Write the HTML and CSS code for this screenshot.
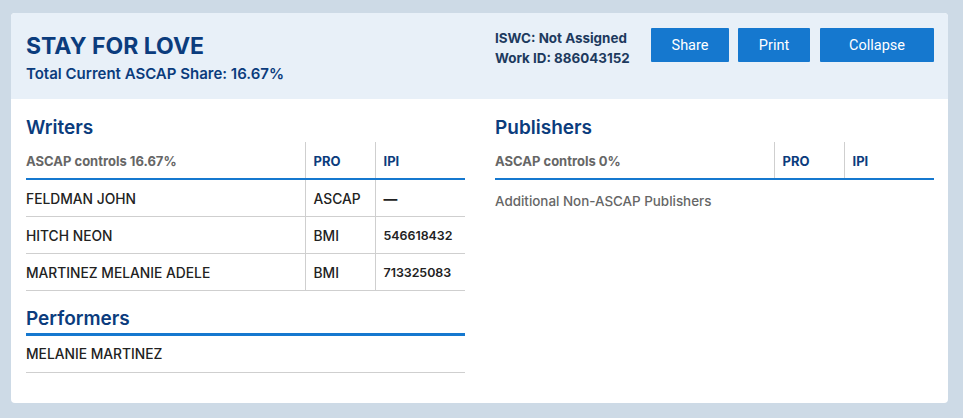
FILE: index.html
```html
<!DOCTYPE html>
<html>
<head>
<meta charset="utf-8">
<link rel="stylesheet" href="styles.css">
</head>
<body>
<div class="card">
  <div class="head">
    <div class="titles">
      <h1 class="title">STAY FOR LOVE</h1>
      <div class="share">Total Current ASCAP Share: 16.67%</div>
    </div>
    <div class="ids">
      <div>ISWC: Not Assigned</div>
      <div>Work ID: 886043152</div>
    </div>
    <div class="btns">
      <button class="btn b-share">Share</button>
      <button class="btn b-print">Print</button>
      <button class="btn b-collapse">Collapse</button>
    </div>
  </div>
  <div class="body">
    <div class="col">
      <h2 class="sec">Writers</h2>
      <table class="tbl">
        <thead>
          <tr><th class="c1">ASCAP controls 16.67%</th><th class="c2">PRO</th><th class="c3">IPI</th></tr>
        </thead>
        <tbody>
          <tr><td>FELDMAN JOHN</td><td>ASCAP</td><td class="dash">—</td></tr>
          <tr><td>HITCH NEON</td><td>BMI</td><td class="num">546618432</td></tr>
          <tr><td>MARTINEZ MELANIE ADELE</td><td>BMI</td><td class="num">713325083</td></tr>
        </tbody>
      </table>
      <h2 class="sec perf">Performers</h2>
      <div class="perf-row">MELANIE MARTINEZ</div>
    </div>
    <div class="col">
      <h2 class="sec">Publishers</h2>
      <table class="tbl">
        <thead>
          <tr><th class="c1">ASCAP controls 0%</th><th class="c2">PRO</th><th class="c3">IPI</th></tr>
        </thead>
      </table>
      <div class="addl">Additional Non-ASCAP Publishers</div>
    </div>
  </div>
</div>
</body>
</html>
```
FILE: styles.css
```css
* { box-sizing: border-box; }
html, body { margin: 0; padding: 0; }
body {
  background: #cddae6;
  font-family: "Inter", "Liberation Sans", sans-serif;
  width: 963px;
  height: 418px;
  padding: 13px 15px 0 11px;
}
.card {
  background: #fff;
  border-radius: 4px;
  height: 390px;
  width: 937px;
  overflow: hidden;
}
.head {
  background: #e8f0f8;
  height: 86px;
  display: flex;
  padding: 13px 14px 0 15px;
}
.titles { flex: 1; }
.title {
  margin: 0;
  color: #0b3c7d;
  font-size: 23px;
  font-weight: 700;
  line-height: 32px;
  padding-top: 4px;
}
.share {
  color: #0b3c7d;
  font-size: 15px;
  font-weight: 600;
  margin-top: 2px;
}
.ids {
  color: #1d3a5e;
  font-size: 13.4px;
  font-weight: 700;
  line-height: 20px;
  padding-top: 2px;
  width: 156px;
}
.btns { display: flex; gap: 9px; padding-top: 2px; }
.btn {
  background: #1578cf;
  color: #fff;
  border: 0;
  height: 34px;
  font-family: "Roboto", "Liberation Sans", sans-serif;
  font-size: 14.5px;
  padding: 0;
  margin: 0;
  border-radius: 1px;
}
.b-share { width: 78px; }
.b-print { width: 72px; }
.b-collapse { width: 114px; margin-left: 1px; }
.body {
  display: flex;
  gap: 30px;
  padding: 15px 14px 0 15px;
}
.col { width: 439px; }
.sec {
  margin: 0;
  color: #0b3c7d;
  font-size: 19px;
  font-weight: 600;
  line-height: 28px;
}
.tbl {
  width: 100%;
  border-collapse: collapse;
  font-size: 13px;
}
.tbl th {
  text-align: left;
  height: 37px;
  border-bottom: 2px solid #1578cf;
  font-weight: 700;
  color: #0b3c7d;
  padding: 2px 0 0 8px;
}
.tbl th.c1 { color: #666; padding-left: 0; width: 279px; }
.tbl th.c2 { width: 70px; border-left: 1px solid #cfcfcf; }
.tbl th.c3 { border-left: 1px solid #cfcfcf; }
.tbl td {
  height: 37px;
  border-bottom: 1px solid #cfcfcf;
  padding: 2px 0 0 8px;
  color: #222;
  font-size: 13.8px;
  font-weight: 500;
  border-left: 1px solid #cfcfcf;
}
.tbl td:first-child { padding-left: 0; border-left: 0; }
.tbl td.num { font-size: 12.4px; font-weight: 600; }
.tbl td.dash { font-weight: 700; }
.perf { margin-top: 13px; border-bottom: 3px solid #1578cf; line-height: 29px; }
.perf-row {
  height: 37px;
  border-bottom: 1px solid #cfcfcf;
  font-size: 13.8px;
  font-weight: 500;
  color: #222;
  padding-top: 10px;
}
.addl {
  font-size: 13.4px;
  font-weight: 500;
  color: #666;
  padding-top: 13px;
}
```
